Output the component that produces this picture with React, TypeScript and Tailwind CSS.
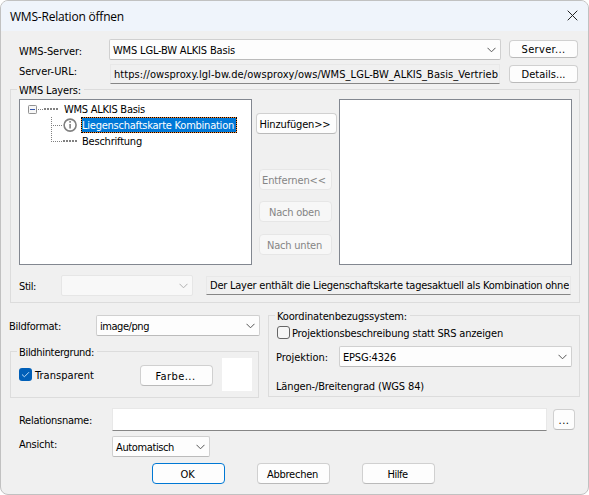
import { useLayoutEffect, useRef, useState, type ReactNode } from "react";

/** Text whose tracking is adjusted so that it fills `w` pixels. */
function T({ w, children, className = "" }: { w: number; children: string; className?: string }) {
  const ref = useRef<HTMLSpanElement>(null);
  const [spacing, setSpacing] = useState(0);
  useLayoutEffect(() => {
    if (ref.current) {
      const natural = ref.current.getBoundingClientRect().width;
      setSpacing((w - natural) / children.length);
    }
  }, []);
  return (
    <span ref={ref} style={{ letterSpacing: `${spacing}px` }} className={`block w-fit shrink-0 pt-[2px] whitespace-pre ${className}`}>
      {children}
    </span>
  );
}

function Chevron({ color = "#555555" }: { color?: string }) {
  return (
    <svg width="9" height="6" viewBox="0 0 9 6" fill="none" stroke={color} className="shrink-0">
      <path d="M0.5 0.8 4.5 4.8 8.5 0.8" />
    </svg>
  );
}

function Select({ text, w, className, disabled }: { text?: string; w?: number; className: string; disabled?: boolean }) {
  return (
    <div
      className={`flex h-[21px] shrink-0 items-center justify-between rounded-[2px] border pr-1 pl-[3px] ${
        disabled ? "border-[#e6e6e6] bg-[#f8f8f8]" : "border-[#d0d0d0] border-b-[#bbbbbb] bg-[#fdfdfd]"
      } ${className}`}
    >
      {text ? <T w={w ?? 0}>{text}</T> : <span />}
      <Chevron color={disabled ? "#b0b0b0" : "#555555"} />
    </div>
  );
}

function Button({ text, w, className, kind = "normal" }: { text: string; w: number; className: string; kind?: "normal" | "disabled" | "primary" }) {
  const look = {
    normal: "border-[#d0d0d0] border-b-[#bababa] bg-[#fdfdfd]",
    disabled: "border-[#e6e6e6] bg-[#f7f7f7] text-[#858585]",
    primary: "border-[#0078d4] bg-[#fdfdfd]",
  }[kind];
  return (
    <button className={`flex shrink-0 items-center justify-center rounded-[4px] border ${look} ${className}`}>
      <T w={w}>{text}</T>
    </button>
  );
}

function Group({ title, w, className, children }: { title: string; w: number; className: string; children: ReactNode }) {
  return (
    <section className={`relative shrink-0 border border-[#dcdcdc] ${className}`}>
      <h2 className="absolute -top-[8px] left-[6px] bg-[#f0f0f0] pr-[3px] pl-[2px] leading-[14px]">
        <T w={w}>{title}</T>
      </h2>
      {children}
    </section>
  );
}

function Tree() {
  return (
    <div className="relative h-[166px] w-[233px] border border-[#828790] bg-white">
      <svg className="absolute top-0 left-0" width="60" height="60" viewBox="20 100 60 60" fill="none">
        <rect x="28.5" y="105.5" width="8" height="8" rx="0.8" fill="#f7f7f7" stroke="#919191" />
        <path d="M30 109.5h5" stroke="#3355aa" />
        <g stroke="#808080" strokeDasharray="1 1">
          <path d="M38 109.5h6M51.5 117v25M53 125.5h10M53 141.5h10" />
        </g>
        <path d="M44 109h14M63 141h14" stroke="#808080" strokeWidth="2" strokeDasharray="2 1" />
        <circle cx="70.1" cy="125.1" r="6" fill="#ffffff" stroke="#808080" strokeWidth="1.6" />
        <path d="M70.1 124v4.6M70.1 121v1.7" stroke="#808080" strokeWidth="1.6" />
      </svg>
      <div className="flex flex-col items-start pt-px">
        <div className="ml-11 h-4"><T w={81}>WMS ALKIS Basis</T></div>
        <div className="ml-[61px] h-4 w-[156px] border border-dotted border-black bg-[#ff8728] leading-[12px] text-white">
          <div className="h-full bg-[#0078d7]">
            <T w={152}>Liegenschaftskarte Kombination</T>
          </div>
        </div>
        <div className="ml-[62px] h-4"><T w={60}>Beschriftung</T></div>
      </div>
    </div>
  );
}

export default function App() {
  return (
    <div className="h-[495px] w-[589px] bg-white font-['DejaVu_Sans_Condensed','DejaVu_Sans',sans-serif] text-[11px] leading-[14px] font-[stretch:condensed] text-black">
      <main className="flex h-[495px] w-[589px] flex-col overflow-hidden rounded-[8px] border border-[#c1c1c1] bg-[#f0f0f0]">
        <header className="flex h-[30px] shrink-0 items-center justify-between bg-[#eff4fb] pr-[10px] pb-px pl-[9px] font-['Open_Sans','Noto_Sans',sans-serif] text-[12px]">
          <T w={114}>WMS-Relation öffnen</T>
          <svg width="11" height="11" viewBox="0 0 11 11" stroke="#222222" fill="none">
            <path d="m0.7 0.7 9.6 9.6M10.3 0.7.7 10.3" />
          </svg>
        </header>

        <div className="flex h-[29px] shrink-0 items-end pl-[18px]">
          <div className="mb-px w-[90px]"><T w={63}>WMS-Server:</T></div>
          <Select text="WMS LGL-BW ALKIS Basis" w={122} className="w-[392px]" />
          <Button text="Server..." w={44} className="mb-[2px] ml-2 h-[18px] w-[69px]" />
        </div>
        <div className="flex h-[24px] shrink-0 items-end pl-[18px]">
          <div className="mb-[5px] w-[91px]"><T w={58}>Server-URL:</T></div>
          <div className="h-[20px] w-[390px] overflow-hidden border border-[#e8e8e8] border-b-[#868686] pr-px pl-[3px] leading-[15px]">
            <div className="overflow-hidden">
              <T w={384}>https://owsproxy.lgl-bw.de/owsproxy/ows/WMS_LGL-BW_ALKIS_Basis_Vertrieb</T>
            </div>
          </div>
          <Button text="Details..." w={44} className="mb-px ml-[9px] h-[18px] w-[69px]" />
        </div>

        <Group title="WMS Layers:" w={62} className="mt-[5px] ml-[9px] h-[214px] w-[570px]">
          <div className="flex pt-[9px] pl-[8px]">
            <Tree />
            <div className="flex w-[87px] flex-col pt-[14px]">
              <Button text="Hinzufügen>>" w={71} className="ml-1 h-[21px] w-[81px] pr-[3px]" />
              <Button kind="disabled" text="Entfernen<<" w={64} className="mt-[35px] ml-[7px] h-[21px] w-[73px] pr-[3px]" />
              <Button kind="disabled" text="Nach oben" w={51} className="mt-[11px] ml-[7px] h-[21px] w-[73px] pr-[2px]" />
              <Button kind="disabled" text="Nach unten" w={55} className="mt-[12px] ml-[7px] h-[21px] w-[73px] pr-[2px]" />
            </div>
            <div className="h-[166px] w-[233px] border border-[#828790] bg-white" />
          </div>
          <div className="mt-[10px] flex h-[21px] items-center pl-[8px]">
            <div className="w-[42px]"><T w={17}>Stil:</T></div>
            <Select disabled className="w-[132px]" />
            <div className="ml-[13px] h-[19px] w-[365px] border border-[#e8e8e8] border-b-[#868686] pr-px pl-[3px] leading-[14px]">
              <div className="overflow-hidden">
                <T w={359}>Der Layer enthält die Liegenschaftskarte tagesaktuell als Kombination ohne</T>
              </div>
            </div>
          </div>
        </Group>

        <div className="mt-[12px] flex shrink-0 items-start pl-[9px]">
          <div className="w-[250px]">
            <div className="flex items-center">
              <div className="-ml-px w-[87px]"><T w={52}>Bildformat:</T></div>
              <Select text="image/png" w={49} className="w-[164px]" />
            </div>
            <Group title="Bildhintergrund:" w={75} className="mt-[15px] h-[47px] w-[249px]">
              <div className="flex h-[45px] items-center pl-[8px]">
                <span className="flex size-[13px] items-center justify-center rounded-[3px] bg-[#005fb8]">
                  <svg width="9" height="7" viewBox="0 0 9 7" fill="none" stroke="#b9dcf8">
                    <path d="m1 3.5 2.4 2.3L8 1.2" />
                  </svg>
                </span>
                <T w={59} className="ml-[3px]">Transparent</T>
                <Button text="Farbe..." w={40} className="mt-[2px] ml-[46px] h-[21px] w-[73px] pr-[2px]" />
                <span className="ml-[9px] h-[33px] w-[30px] bg-white" />
              </div>
            </Group>
          </div>
          <Group title="Koordinatenbezugssystem:" w={130} className="ml-2 h-[82px] w-[312px]">
            <div className="pt-[9px] pl-[7px]">
              <div className="flex h-[15px] items-center">
                <span className="ml-px size-[13px] rounded-[3px] border border-[#666666] bg-[#f6f6f6]" />
                <T w={211} className="ml-[2px]">Projektionsbeschreibung statt SRS anzeigen</T>
              </div>
              <div className="mt-[6px] flex items-center">
                <div className="w-[63px]"><T w={52}>Projektion:</T></div>
                <Select text="EPSG:4326" w={53} className="w-[233px]" />
              </div>
              <div className="mt-[11px]"><T w={148}>Längen-/Breitengrad (WGS 84)</T></div>
            </div>
          </Group>
        </div>

        <div className="mt-[10px] flex shrink-0 items-center pl-[18px]">
          <div className="w-[93px]"><T w={73}>Relationsname:</T></div>
          <div className="h-[23px] w-[435px] border border-[#e8e8e8] border-b-[#868686] bg-white" />
          <Button text="..." w={11} className="ml-[6px] h-[21px] w-[22px]" />
        </div>
        <div className="mt-[5px] flex shrink-0 items-start pl-[18px]">
          <div className="w-[93px]"><T w={38}>Ansicht:</T></div>
          <Select text="Automatisch" w={58} className="w-[98px]" />
        </div>
        <footer className="mt-[6px] flex shrink-0 gap-8 pl-[151px]">
          <Button kind="primary" text="OK" w={14} className="h-[21px] w-[73px] pr-[2px]" />
          <Button text="Abbrechen" w={51} className="h-[21px] w-[73px] pr-[2px]" />
          <Button text="Hilfe" w={20} className="h-[21px] w-[73px] pr-[2px]" />
        </footer>
      </main>
    </div>
  );
}
